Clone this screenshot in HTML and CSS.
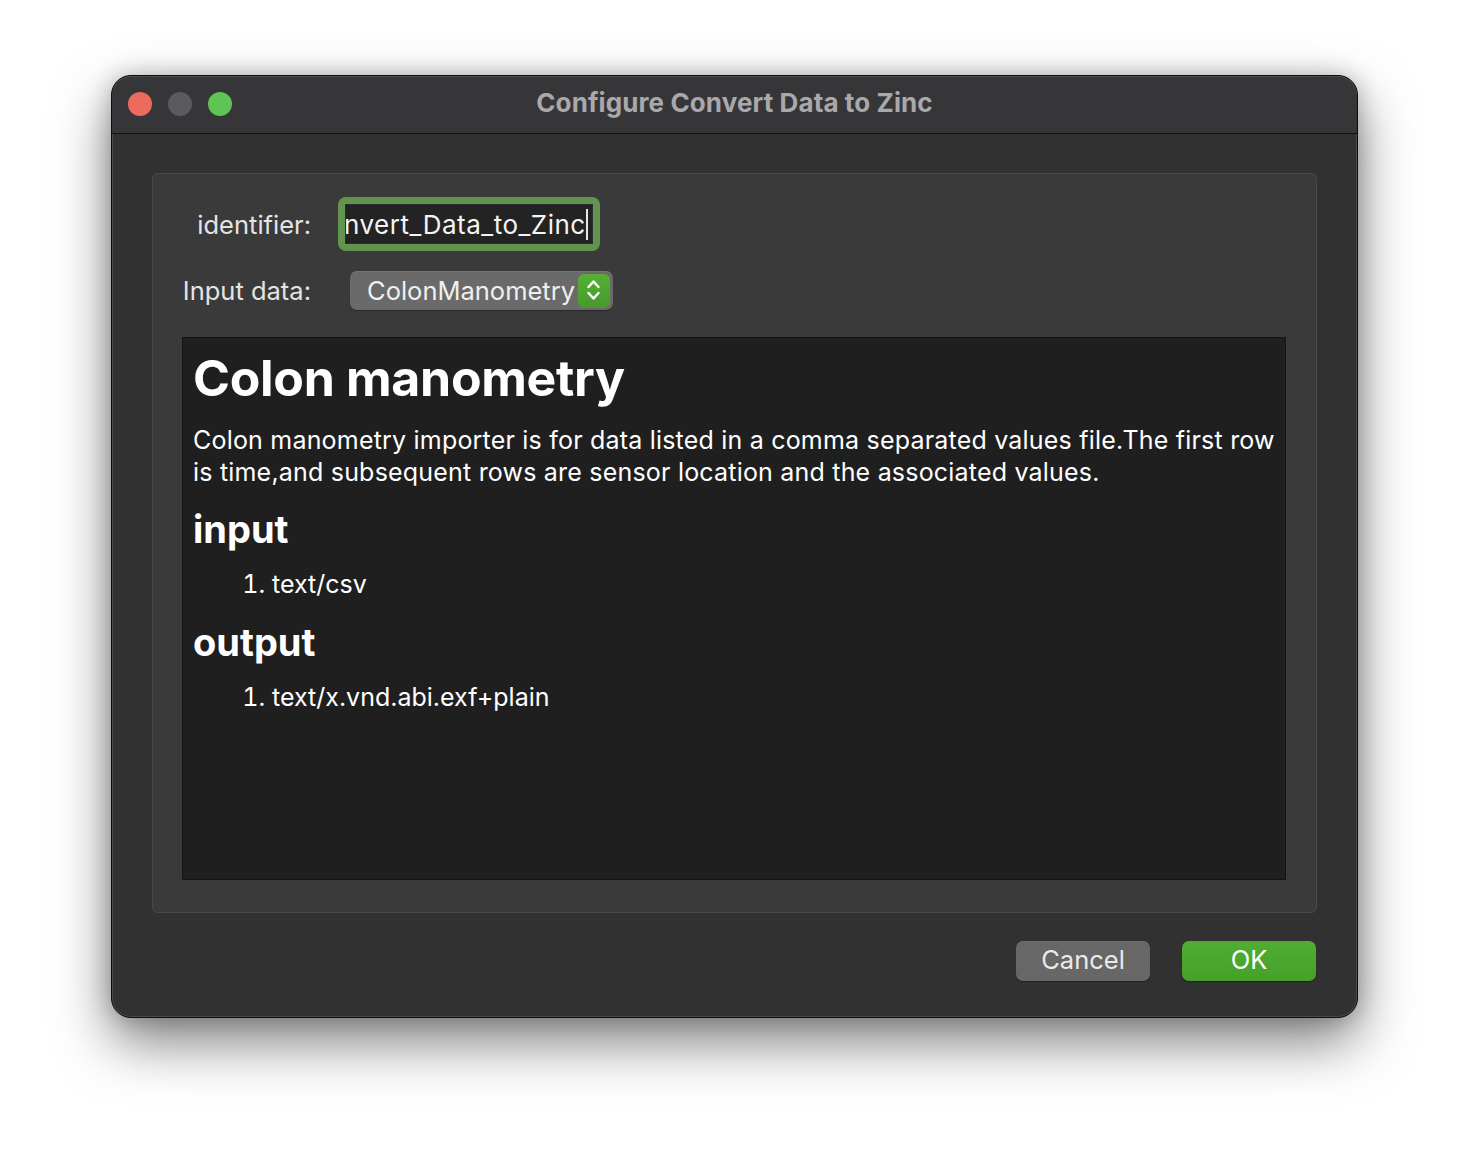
FILE: index.html
```html
<!DOCTYPE html>
<html>
<head>
<meta charset="utf-8">
<link rel="stylesheet" href="styles.css">
</head>
<body>
<div class="window">
  <div class="titlebar">
    <div class="lights">
      <span class="light red"></span>
      <span class="light gray"></span>
      <span class="light green"></span>
    </div>
    <div class="title">Configure Convert Data to Zinc</div>
  </div>
  <div class="content">
    <div class="group">
      <div class="row row-id">
        <label class="label">identifier:</label>
        <div class="focus-ring">
          <div class="field"><span class="field-text">nvert_Data_to_Zinc</span><span class="caret"></span></div>
        </div>
      </div>
      <div class="row row-input">
        <label class="label">Input data:</label>
        <div class="popup">
          <span class="popup-text">ColonManometry</span>
          <span class="stepper">
            <svg width="32" height="34" viewBox="0 0 32 34">
              <path d="M10.5 13 L15.5 7.5 L20.5 13" fill="none" stroke="#fff" stroke-width="2.4" stroke-linecap="round" stroke-linejoin="round"/>
              <path d="M10.5 19 L15.5 24.5 L20.5 19" fill="none" stroke="#fff" stroke-width="2.4" stroke-linecap="round" stroke-linejoin="round"/>
            </svg>
          </span>
        </div>
      </div>
      <div class="browser">
        <h1 class="doc-title">Colon manometry</h1>
        <p class="doc-text">Colon manometry importer is for data listed in a comma separated values file.The first row is time,and subsequent rows are sensor location and the associated values.</p>
        <h2 class="doc-sub">input</h2>
        <ol class="doc-list"><li>text/csv</li></ol>
        <h2 class="doc-sub">output</h2>
        <ol class="doc-list"><li>text/x.vnd.abi.exf+plain</li></ol>
      </div>
    </div>
    <div class="buttons">
      <button class="btn btn-cancel">Cancel</button>
      <button class="btn btn-ok">OK</button>
    </div>
  </div>
</div>
</body>
</html>
```

FILE: styles.css
```css
html, body {
  margin: 0;
  padding: 0;
  background: #ffffff;
}
body {
  font-family: "Inter", "Liberation Sans", sans-serif;
  width: 1470px;
  height: 1166px;
  overflow: hidden;
}
.window {
  margin: 75px 0 0 111px;
  width: 1247px;
  height: 943px;
  box-sizing: border-box;
  border: 1px solid #0c0c0c;
  border-radius: 20px;
  background: #313131;
  box-shadow: inset 0 0 0 1px rgba(255,255,255,0.13), 0 24px 55px rgba(0,0,0,0.5), 0 0 22px rgba(0,0,0,0.22);
  display: flex;
  flex-direction: column;
  overflow: hidden;
}
.titlebar {
  height: 57px;
  flex: none;
  background: #363638;
  border-bottom: 1px solid #111;
  border-radius: 19px 19px 0 0;
  box-shadow: inset 0 1px 0 rgba(255,255,255,0.12);
  position: relative;
  display: flex;
  align-items: center;
  justify-content: center;
}
.lights {
  position: absolute;
  left: 16px;
  top: 16px;
  display: flex;
  gap: 16px;
}
.light {
  width: 24px;
  height: 24px;
  border-radius: 50%;
  display: block;
}
.red { background: #ed6a5e; }
.gray { background: #5b5b5d; }
.green { background: #5fc453; }
.title {
  color: #a9a9ab;
  font-size: 26px;
  font-weight: 700;
  letter-spacing: 0.1px;
  margin-top: -4px;
}
.content {
  flex: 1;
  display: flex;
  flex-direction: column;
  padding: 39px 40px 0 40px;
}
.group {
  height: 740px;
  box-sizing: border-box;
  background: #3a3a3a;
  border: 1px solid #4a4a4a;
  border-radius: 6px;
  padding: 23px 30px 32px 29px;
  display: flex;
  flex-direction: column;
}
.row {
  display: flex;
  align-items: center;
}
.label {
  width: 129px;
  text-align: right;
  color: #e4e4e4;
  font-size: 25.5px;
  flex: none;
  white-space: nowrap;
}
.row-id { height: 54px; }
.row-input { height: 39px; margin-top: 20px; }
.focus-ring {
  margin-left: 27px;
  width: 262px;
  height: 54px;
  box-sizing: border-box;
  padding: 7px;
  background: #62944f;
  border-radius: 8px;
}
.field {
  height: 40px;
  background: #232323;
  box-sizing: border-box;
  border: 1px solid #2e2e2e;
  display: flex;
  align-items: center;
  overflow: hidden;
  white-space: nowrap;
}
.field-text {
  color: #f4f4f4;
  font-size: 26px;
  letter-spacing: 0.5px;
  margin-left: -2px;
}
.caret {
  width: 2px;
  height: 31px;
  background: #e8e8e8;
  margin-left: 0;
  flex: none;
}
.popup {
  margin-left: 39px;
  width: 263px;
  height: 39px;
  box-sizing: border-box;
  background: #6a6a6a;
  border-radius: 7px;
  box-shadow: 0 1px 1px rgba(0,0,0,0.3), inset 0 1px 0 rgba(255,255,255,0.08);
  display: flex;
  align-items: center;
  padding-left: 17px;
  padding-right: 3px;
}
.popup-text {
  color: #f0f0f0;
  font-size: 25.5px;
  flex: 1;
  white-space: nowrap;
}
.stepper {
  width: 32px;
  height: 34px;
  border-radius: 6px;
  background: linear-gradient(#55b035, #47992b);
  display: block;
  flex: none;
}
.stepper svg { display: block; }
.browser {
  margin-top: 27px;
  flex: 1;
  background: #1f1f1f;
  border: 1px solid #141414;
  padding: 6px 10px 0 10px;
  color: #ffffff;
}
.doc-title {
  margin: 0;
  font-size: 50px;
  font-weight: 700;
  line-height: 68px;
  letter-spacing: -0.3px;
}
.doc-text {
  margin: 12px 0 0 0;
  font-size: 25px;
  letter-spacing: 0.2px;
  line-height: 32px;
}
.doc-sub {
  margin: 16px 0 0 0;
  font-size: 38px;
  font-weight: 700;
  line-height: 50px;
  letter-spacing: 0px;
}
.doc-list {
  margin: 13px 0 0 0;
  padding-left: 79px;
  font-size: 25px;
  line-height: 34px;
}
.buttons {
  display: flex;
  justify-content: flex-end;
  gap: 32px;
  margin-top: 28px;
  padding-right: 1px;
}
.btn {
  width: 134px;
  height: 40px;
  border: none;
  border-radius: 7px;
  font-family: "Inter", "Liberation Sans", sans-serif;
  font-size: 25.5px;
  color: #eaeaea;
  padding: 0 0 4px 0;
}
.btn-cancel {
  background: #676767;
  box-shadow: 0 1px 1px rgba(0,0,0,0.3), inset 0 1px 0 rgba(255,255,255,0.06);
}
.btn-ok {
  background: linear-gradient(#4fae32, #46a02b);
  color: #ffffff;
  box-shadow: 0 1px 1px rgba(0,0,0,0.3);
}
```
